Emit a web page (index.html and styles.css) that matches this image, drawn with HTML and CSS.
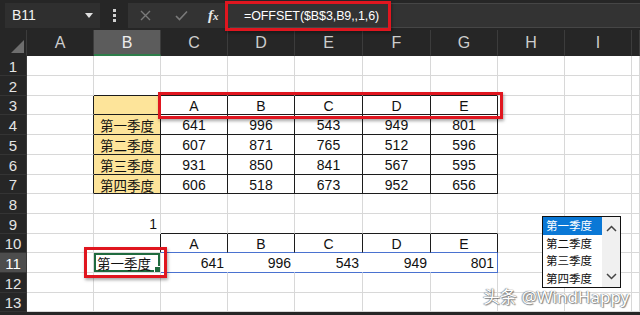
FILE: index.html
```html
<!DOCTYPE html>
<html lang="zh-CN">
<head>
<meta charset="UTF-8" />
<title>OFFSET</title>
<link rel="stylesheet" href="styles.css">
</head>
<body>
<div class="toolbar">
  <div class="namebox"><span>B11</span><span class="caret"></span></div>
  <div class="dots"><i></i><i></i><i></i></div>
  <div class="fbtns">
    <svg class="ico" width="11" height="11" viewBox="0 0 11 11"><path d="M1 1 L10 10 M10 1 L1 10" stroke="#7a7a7a" stroke-width="1.4" fill="none"/></svg>
    <svg class="ico" width="13" height="11" viewBox="0 0 13 11"><path d="M1 6 L4.5 9.5 L12 1.5" stroke="#7a7a7a" stroke-width="1.6" fill="none"/></svg>
    <span class="fx">f<small>x</small></span>
  </div>
  <div class="formula">=OFFSET($B$3,B9,,1,6)</div>
</div>

<div class="sheet">
  <div class="row head">
    <div class="corner"><span></span></div><div>A</div><div class="on">B</div><div>C</div><div>D</div><div>E</div><div>F</div><div>G</div><div>H</div><div>I</div><div></div>
  </div>
  <!-- 1 -->
  <div class="row"><div>1</div><div></div><div></div><div></div><div></div><div></div><div></div><div></div><div></div><div></div><div></div></div>
  <!-- 2 -->
  <div class="row"><div>2</div><div></div><div class="bb"></div><div class="bb"></div><div class="bb"></div><div class="bb"></div><div class="bb"></div><div class="bb"></div><div></div><div></div><div></div></div>
  <!-- 3 -->
  <div class="row s"><div>3</div><div class="br"></div><div class="t y"></div><div class="t">A</div><div class="t">B</div><div class="t">C</div><div class="t">D</div><div class="t">E</div><div></div><div></div><div></div></div>
  <!-- 4 -->
  <div class="row"><div>4</div><div class="br"></div><div class="t y">第一季度</div><div class="t">641</div><div class="t">996</div><div class="t">543</div><div class="t">949</div><div class="t">801</div><div></div><div></div><div></div></div>
  <!-- 5 -->
  <div class="row"><div>5</div><div class="br"></div><div class="t y">第二季度</div><div class="t">607</div><div class="t">871</div><div class="t">765</div><div class="t">512</div><div class="t">596</div><div></div><div></div><div></div></div>
  <!-- 6 -->
  <div class="row"><div>6</div><div class="br"></div><div class="t y">第三季度</div><div class="t">931</div><div class="t">850</div><div class="t">841</div><div class="t">567</div><div class="t">595</div><div></div><div></div><div></div></div>
  <!-- 7 -->
  <div class="row s"><div>7</div><div class="br"></div><div class="t y">第四季度</div><div class="t">606</div><div class="t">518</div><div class="t">673</div><div class="t">952</div><div class="t">656</div><div></div><div></div><div></div></div>
  <!-- 8 -->
  <div class="row"><div>8</div><div></div><div></div><div></div><div></div><div></div><div></div><div></div><div></div><div></div><div></div></div>
  <!-- 9 -->
  <div class="row"><div>9</div><div></div><div class="r">1</div><div class="bb"></div><div class="bb"></div><div class="bb"></div><div class="bb"></div><div class="bb"></div><div></div><div></div><div></div></div>
  <!-- 10 -->
  <div class="row s"><div>10</div><div></div><div class="br"></div><div class="th">A</div><div class="th">B</div><div class="th">C</div><div class="th">D</div><div class="th">E</div><div></div><div></div><div></div></div>
  <!-- 11 -->
  <div class="row"><div class="on">11</div><div></div><div class="sel">第一季度</div><div class="r val">641</div><div class="r val">996</div><div class="r val">543</div><div class="r val">949</div><div class="r val end">801</div><div></div><div></div><div></div></div>
  <!-- 12 -->
  <div class="row"><div>12</div><div></div><div></div><div></div><div></div><div></div><div></div><div></div><div></div><div></div><div></div></div>
  <!-- 13 -->
  <div class="row s"><div>13</div><div></div><div></div><div></div><div></div><div></div><div></div><div></div><div></div><div></div><div></div></div>
</div>

<!-- list box control -->
<div class="listbox">
  <ul>
    <li class="cur">第一季度</li>
    <li>第二季度</li>
    <li>第三季度</li>
    <li>第四季度</li>
  </ul>
  <div class="scroll">
    <svg width="11" height="7" viewBox="0 0 11 7"><path d="M1 6 L5.5 1.5 L10 6" stroke="#444" stroke-width="1.5" fill="none"/></svg>
    <svg width="11" height="7" viewBox="0 0 11 7"><path d="M1 1 L5.5 5.5 L10 1" stroke="#444" stroke-width="1.5" fill="none"/></svg>
  </div>
</div>

<!-- red call-outs -->
<div class="mark mark-formula"></div>
<div class="mark mark-head"></div>
<div class="mark mark-cell"></div>

<div class="watermark">头条 @WindHappy</div>
</body>
</html>
```

FILE: styles.css
```css
/* Base */
* {
  margin: 0;
  padding: 0;
  box-sizing: border-box;
}

body {
  position: relative;
  width: 640px;
  height: 315px;
  overflow: hidden;
  background: #262626;
  font-family: "Liberation Sans", "Noto Sans CJK SC", sans-serif;
}

/* Formula bar */
.toolbar {
  display: flex;
  align-items: center;
  height: 30px;
  padding-left: 5px;
}

.namebox {
  display: flex;
  align-items: center;
  justify-content: space-between;
  width: 95px;
  height: 25px;
  padding: 0 7px;
  background: #2f2f2f;
  color: #f2f2f2;
  font-size: 14px;
}

.caret {
  width: 0;
  height: 0;
  border-left: 4px solid transparent;
  border-right: 4px solid transparent;
  border-top: 5px solid #e0e0e0;
}

.dots {
  display: flex;
  flex-direction: column;
  align-items: center;
  gap: 2px;
  width: 28px;
}
.dots i {
  width: 3px;
  height: 3px;
  background: #d0d0d0;
}

.fbtns {
  display: flex;
  align-items: center;
  width: 102px;
  height: 25px;
  padding-left: 12px;
  gap: 24px;
  background: #333;
}

.fx {
  margin-left: -4px;
  color: #e8e8e8;
  font-family: "Liberation Serif", serif;
  font-style: italic;
  font-weight: bold;
  font-size: 15px;
}
.fx small {
  font-size: 11px;
}

.formula {
  flex: 1;
  height: 25px;
  padding-left: 14px;
  line-height: 24px;
  background: #333;
  border-top: 1px solid #464646;
  border-bottom: 1px solid #464646;
  color: #fff;
  font-size: 12.5px;
  letter-spacing: -0.1px;
}

/* Sheet grid */
.sheet {
  background: #fff;
}

.row {
  display: grid;
  grid-template-columns: 27px 67px 67px 67px 67px 68px 68px 67px 67px 67px 1fr;
  height: 20px;
}
.row.s {
  height: 19px;
}

.row > div {
  display: flex;
  align-items: center;
  justify-content: center;
  padding-top: 1px;
  border-right: 1px solid #d8d8d8;
  border-bottom: 1px solid #d8d8d8;
  color: #111;
  font-size: 14px;
  white-space: nowrap;
  overflow: hidden;
}

/* Row numbers */
.row > div:first-child {
  background: #262626;
  color: #e4e4e4;
  font-size: 15px;
  border-right-color: #3a3a3a;
  border-bottom-color: #343434;
}
.row > div.on:first-child {
  background: #4d4d4d;
  color: #fff;
}

/* Column letters */
.row.head {
  height: 26px;
}
.row.head > div {
  background: #262626;
  color: #cdcdcd;
  font-size: 16px;
  border-right-color: #3c3c3c;
  border-bottom-color: #262626;
}
.row.head > div.on {
  background: #5c5c5c;
  color: #ededed;
  border-bottom: 2px solid #2e7d4a;
}

.corner {
  position: relative;
}
.corner span {
  position: absolute;
  right: 2px;
  bottom: 2px;
  width: 0;
  height: 0;
  border-left: 13px solid transparent;
  border-bottom: 13px solid #6e6e6e;
}

/* Cell formats */
.row > .t {
  border-right-color: #1c1c1c;
  border-bottom-color: #1c1c1c;
}
.row > .bb {
  border-bottom-color: #1c1c1c;
}
.row > .br {
  border-right-color: #1c1c1c;
}
.row > .y {
  background: #fde49a;
  font-family: "Noto Sans CJK SC", sans-serif;
  font-size: 13.5px;
}
.row > .r {
  justify-content: flex-end;
  padding-right: 3px;
}
.row > .th {
  border-right-color: #1c1c1c;
  border-bottom-color: #4a72d0;
}
.row > .val {
  border-right-color: #fff;
  border-bottom-color: #4a72d0;
}
.row > .val.end {
  border-right-color: #4a72d0;
}

.row > .sel {
  position: relative;
  justify-content: flex-start;
  padding-left: 3px;
  font-family: "Noto Sans CJK SC", sans-serif;
  font-size: 13.5px;
  box-shadow: inset 0 0 0 2px #1f6b3f;
}
.sel::after {
  content: "";
  position: absolute;
  right: 0;
  bottom: 0;
  width: 5px;
  height: 5px;
  background: #1f6b3f;
  border-left: 1px solid #fff;
  border-top: 1px solid #fff;
}

/* List box */
.listbox {
  position: absolute;
  left: 542px;
  top: 216px;
  display: flex;
  width: 79px;
  height: 72px;
  border: 1px solid #111;
  background: #fff;
}
.listbox ul {
  list-style: none;
  width: 59px;
}
.listbox li {
  height: 17.5px;
  padding-left: 3px;
  line-height: 17.5px;
  font-family: "Noto Sans CJK SC", sans-serif;
  font-size: 11.5px;
  color: #111;
}
.listbox li.cur {
  background: #0a78d6;
  color: #fff;
}
.scroll {
  display: flex;
  flex-direction: column;
  justify-content: space-between;
  align-items: center;
  flex: 1;
  padding: 8px 0 7px;
  background: #f0f0f0;
}

/* Red call-out frames */
.mark {
  position: absolute;
  border: 3px solid #e0161f;
  box-shadow: 1px 2px 3px rgba(0, 0, 0, 0.35);
}
.mark-formula {
  left: 225px;
  top: 1px;
  width: 166px;
  height: 30px;
}
.mark-head {
  left: 158px;
  top: 92px;
  width: 345px;
  height: 27px;
}
.mark-cell {
  left: 84px;
  top: 247px;
  width: 83px;
  height: 31px;
}

/* Watermark */
.watermark {
  position: absolute;
  left: 483px;
  top: 283px;
  font-family: "Noto Sans", "Noto Sans CJK SC", sans-serif;
  font-size: 17px;
  color: #fff;
  text-shadow:
    0 0 1px #555,
    1px 1px 1px rgba(0, 0, 0, 0.45),
    -1px 0 1px rgba(0, 0, 0, 0.3);
}
```
